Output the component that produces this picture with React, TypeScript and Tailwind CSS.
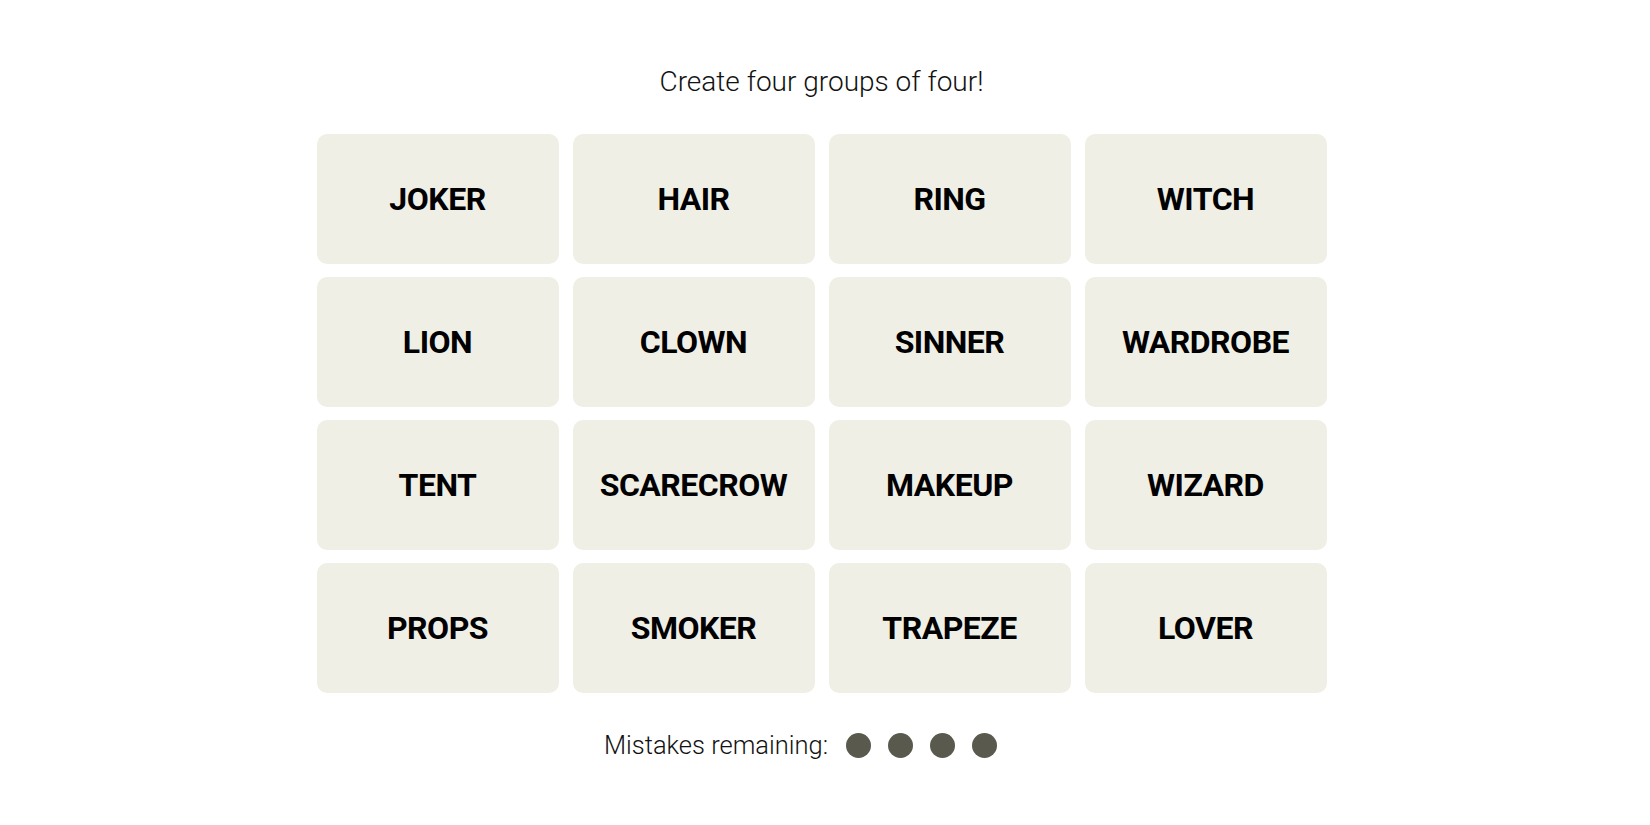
const WORDS = [
  'JOKER', 'HAIR', 'RING', 'WITCH',
  'LION', 'CLOWN', 'SINNER', 'WARDROBE',
  'TENT', 'SCARECROW', 'MAKEUP', 'WIZARD',
  'PROPS', 'SMOKER', 'TRAPEZE', 'LOVER',
];

export default function App() {
  return (
    <div className="min-h-screen bg-white text-black" style={{ fontFamily: 'Roboto, "Liberation Sans", sans-serif' }}>
      <div className="flex flex-col items-center pt-[63px] pr-[7px]">
        <p className="text-[28px] font-light leading-[38px] text-[#121212]">Create four groups of four!</p>

        <div className="mt-[33px] grid grid-cols-[repeat(4,242px)] gap-x-[14px] gap-y-[13px]">
          {WORDS.map((w) => (
            <div
              key={w}
              className="h-[130px] rounded-[10px] bg-[#efefe6] flex items-center justify-center text-[32px] font-bold tracking-[-0.5px] text-black"
            >
              {w}
            </div>
          ))}
        </div>

        <div className="mt-[33px] mr-[42px] flex items-center">
          <span className="text-[25.5px] font-light text-[#121212]">Mistakes remaining:</span>
          <div className="ml-[18px] flex items-center gap-[17px]">
            {[0, 1, 2, 3].map((i) => (
              <span key={i} className="w-[25px] h-[25px] rounded-full bg-[#5a594e]" />
            ))}
          </div>
        </div>
      </div>
    </div>
  );
}
